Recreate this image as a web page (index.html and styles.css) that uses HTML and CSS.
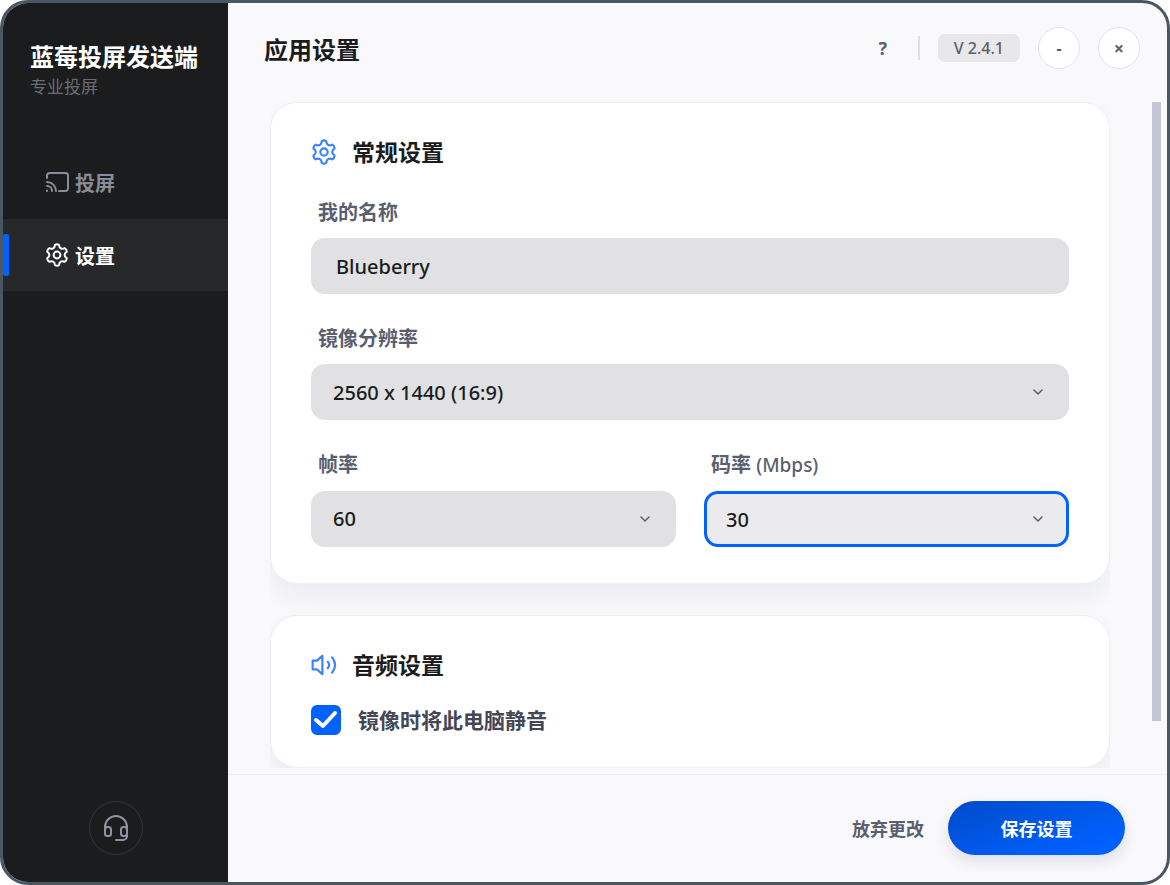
FILE: index.html
```html
<!DOCTYPE html>
<html lang="zh-CN">
<head>
<meta charset="utf-8">
<meta name="viewport" content="width=device-width, initial-scale=1">
<title>应用设置</title>
<link rel="stylesheet" href="styles.css">
</head>
<body>
<svg class="sprite" aria-hidden="true">
  <symbol id="gear" viewBox="0 0 24 24">
    <path d="M9.900 2Q12 .6 14.100 2C14.100 5.200 16.800 6.800 19.600 5.200Q21.900 6.300 21.700 8.800C18.900 10.400 18.900 13.600 21.700 15.200Q21.900 17.700 19.600 18.800C16.800 17.200 14.100 18.800 14.100 22Q12 23.400 9.900 22C9.900 18.800 7.200 17.200 4.400 18.800Q2.100 17.700 2.300 15.200C5.100 13.600 5.100 10.400 2.300 8.800Q2.100 6.300 4.400 5.200C7.200 6.800 9.900 5.200 9.900 2z"/>
    <circle cx="12" cy="12" r="3.400"/>
  </symbol>
</svg>
<div class="window">
  <aside class="sidebar">
    <div class="brand">
      <p class="brand-name">蓝莓投屏发送端</p>
      <p class="brand-note">专业投屏</p>
    </div>
    <nav class="nav">
      <a class="nav-item" href="#cast">
        <svg class="nav-icon" viewBox="0 0 24 24" aria-hidden="true"><path d="M2 8V5.500A2.500 2.500 0 0 1 4.500 3h16A2.500 2.500 0 0 1 23 5.500v13a2.500 2.500 0 0 1-2.500 2.500H14M2 12a9 9 0 0 1 9 9M2 16a5 5 0 0 1 5 5M2 20.500v.5"/></svg>
        <span>投屏</span>
      </a>
      <a class="nav-item nav-item-active" href="#settings" aria-current="page">
        <svg class="nav-icon" viewBox="0 0 24 24" aria-hidden="true"><use href="#gear"/></svg>
        <span>设置</span>
      </a>
    </nav>
    <button class="support" type="button" aria-label="客服">
      <svg class="support-icon" viewBox="0 0 26 26" aria-hidden="true"><path d="M2 18v-6a11 11 0 0 1 22 0v9a4 4 0 0 1-4 4h-7"/><rect x="2" y="12" width="6" height="9" rx="2.500"/><rect x="18" y="12" width="6" height="9" rx="2.500"/></svg>
    </button>
  </aside>

  <main class="main">
    <header class="header">
      <h1 class="title">应用设置</h1>
      <button class="help" type="button" aria-label="帮助">?</button>
      <span class="divider"></span>
      <span class="version">V 2.4.1</span>
      <button class="round" type="button" aria-label="最小化">-</button>
      <button class="round round-close" type="button" aria-label="关闭">×</button>
    </header>

    <form class="form" id="settings-form">
      <div class="cards">
        <section class="card">
          <h2 class="card-title">
            <svg class="card-icon" viewBox="0 0 24 24" aria-hidden="true"><use href="#gear"/></svg>
            常规设置
          </h2>
          <div class="fields">
            <div class="field field-wide">
              <label class="label" for="name">我的名称</label>
              <input class="control control-text" id="name" type="text" value="Blueberry">
            </div>
            <div class="field field-wide">
              <label class="label" for="resolution">镜像分辨率</label>
              <div class="picker">
                <select class="control" id="resolution"><option>2560 x 1440 (16:9)</option></select>
                <svg class="chevron" viewBox="0 0 10 10" aria-hidden="true"><path d="M1 3l4 4 4-4"/></svg>
              </div>
            </div>
            <div class="field">
              <label class="label" for="fps">帧率</label>
              <div class="picker">
                <select class="control" id="fps"><option>60</option></select>
                <svg class="chevron" viewBox="0 0 10 10" aria-hidden="true"><path d="M1 3l4 4 4-4"/></svg>
              </div>
            </div>
            <div class="field">
              <label class="label" for="bitrate">码率 <span class="unit">(Mbps)</span></label>
              <div class="picker">
                <select class="control control-focus" id="bitrate"><option>30</option></select>
                <svg class="chevron" viewBox="0 0 10 10" aria-hidden="true"><path d="M1 3l4 4 4-4"/></svg>
              </div>
            </div>
          </div>
        </section>

        <section class="card">
          <h2 class="card-title card-title-audio">
            <svg class="card-icon" viewBox="0 0 24 24" aria-hidden="true"><path d="M1.500 8h4L10.500 3.500v17l-5-4.500h-4zM15.500 9q2.500 3 0 6M19.500 5q5.500 7 0 14"/></svg>
            音频设置
          </h2>
          <label class="check">
            <input class="check-box" type="checkbox" checked>
            <svg class="check-mark" viewBox="0 0 30 30" aria-hidden="true"><path d="M5 15l7 6L24 8"/></svg>
            <span class="check-text">镜像时将此电脑静音</span>
          </label>
        </section>
      </div>
      <div class="scroll" aria-hidden="true"><div class="thumb"></div></div>
    </form>

    <footer class="footer">
      <button class="discard" type="reset" form="settings-form">放弃更改</button>
      <button class="save" type="submit" form="settings-form">保存设置</button>
    </footer>
  </main>
</div>
</body>
</html>
```
FILE: styles.css
```css
* {
  box-sizing: border-box;
}

body {
  margin: 0;
  background: #fff;
  font-family: "Noto Sans", "Noto Sans CJK SC", sans-serif;
  color: #1a1c1d;
}

h1, h2, p {
  margin: 0;
}

button, input, select {
  font: inherit;
  color: inherit;
}

button {
  padding: 0;
  border: 0;
  background: none;
  cursor: pointer;
}

svg {
  fill: none;
  stroke: currentColor;
  stroke-width: 2;
  stroke-linecap: round;
  stroke-linejoin: round;
}

.sprite {
  position: absolute;
  width: 0;
  height: 0;
}

.window {
  display: grid;
  grid-template-columns: 225px 1fr;
  min-height: 100vh;
  border: 3px solid #4b5665;
  border-radius: 28px;
  background: #f9f9fc;
  overflow: hidden;
}

/* Sidebar */

.sidebar {
  display: flex;
  flex-direction: column;
  padding: 37px 0 27px;
  background: #1a1c1d;
}

.brand {
  padding: 0 27px;
}

.brand-name {
  font-size: 24px;
  line-height: 34px;
  font-weight: 700;
  color: #fff;
}

.brand-note {
  font-size: 17px;
  line-height: 26px;
  color: #6b6d76;
}

.nav {
  display: grid;
  gap: 1px;
  margin-top: 46px;
}

.nav-item {
  position: relative;
  display: flex;
  align-items: center;
  gap: 6px;
  height: 72px;
  padding-left: 42px;
  font-size: 20px;
  font-weight: 700;
  color: #8a8d98;
  text-decoration: none;
}

.nav-item-active {
  background: #262829;
  color: #fff;
}

.nav-item-active::before {
  content: "";
  position: absolute;
  left: 0;
  top: 15px;
  bottom: 15px;
  width: 6px;
  border-radius: 2px;
  background: #0062ff;
}

.nav-icon {
  width: 24px;
  height: 24px;
}

.support {
  display: grid;
  place-items: center;
  width: 54px;
  height: 54px;
  margin: auto auto 0;
  border: 1px solid #333537;
  border-radius: 50%;
  color: #8f92a1;
}

.support-icon {
  width: 26px;
  height: 26px;
}

/* Header */

.main {
  display: flex;
  flex-direction: column;
  min-width: 0;
}

.header {
  display: flex;
  align-items: center;
  gap: 18px;
  height: 90px;
  margin-bottom: 9px;
  padding: 0 27px 0 36px;
  color: #5a5f6e;
}

.title {
  margin-right: auto;
  font-size: 24px;
  font-weight: 700;
  color: #1a1c1d;
}

.help {
  width: 34px;
  font-size: 18px;
  font-weight: 700;
}

.divider {
  width: 2px;
  height: 24px;
  background: #dcdfea;
}

.version {
  padding: 0 16px;
  border-radius: 7px;
  background: #e8e8ea;
  font-size: 16px;
  line-height: 28px;
  font-weight: 500;
}

.round {
  width: 42px;
  height: 42px;
  border: 1px solid #dfe2ee;
  border-radius: 50%;
  background: #fff;
  font-size: 16px;
  font-weight: 700;
}

.round-close {
  font-size: 18px;
}

/* Cards */

.form {
  display: flex;
  flex: 1;
  gap: 42px;
  padding: 0 6px 6px 42px;
}

.cards {
  display: flex;
  flex: 1;
  flex-direction: column;
  gap: 31px;
  min-width: 0;
  overflow: hidden;
}

.card {
  padding: 35px 40px 36px;
  border: 1px solid #eeeff4;
  border-radius: 27px;
  background: #fff;
  box-shadow: 0 12px 24px rgba(25, 30, 45, 0.06);
}

.card + .card {
  padding-bottom: 32px;
}

.card-title {
  display: flex;
  align-items: center;
  gap: 15px;
  margin-bottom: 32px;
  font-size: 23px;
  line-height: 28px;
  font-weight: 700;
}

.card-title-audio {
  margin-bottom: 26px;
}

.card-icon {
  width: 26px;
  height: 26px;
  color: #3b82ff;
}

.fields {
  display: grid;
  grid-template-columns: 1fr 1fr;
  gap: 30px 28px;
}

.field {
  display: grid;
  gap: 11px;
}

.field-wide {
  grid-column: 1 / -1;
}

.label {
  padding-left: 7px;
  font-size: 20px;
  line-height: 29px;
  font-weight: 700;
  color: #5a5f70;
}

.unit {
  font-size: 19px;
  font-weight: 500;
}

.control {
  width: 100%;
  height: 56px;
  padding: 0 22px;
  border: 0;
  border-radius: 14px;
  outline: 0;
  background: #e1e1e3;
  font-size: 20px;
  font-weight: 500;
  color: #1a1c1d;
  appearance: none;
}

.control-text {
  padding: 0 25px;
}

.control-focus {
  padding: 0 19px;
  border: 3px solid #0062ff;
  background: #ebebed;
}

.picker {
  display: grid;
  align-items: center;
}

.picker > * {
  grid-area: 1 / 1;
}

.chevron {
  justify-self: end;
  width: 10px;
  height: 10px;
  margin-right: 26px;
  color: #5a5f70;
  stroke-width: 1.500;
  pointer-events: none;
}

.check {
  display: grid;
  grid-template-columns: 30px 1fr;
  align-items: center;
  column-gap: 17px;
  height: 30px;
}

.check-box {
  grid-area: 1 / 1;
  width: 30px;
  height: 30px;
  margin: 0;
  border-radius: 6px;
  background: #fff;
  border: 2px solid #c3c7d3;
  appearance: none;
}

.check-box:checked {
  border-color: #0062ff;
  background: #0062ff;
}

.check-mark {
  grid-area: 1 / 1;
  z-index: 1;
  width: 30px;
  height: 30px;
  color: #fff;
  stroke-width: 4;
  pointer-events: none;
}

.check-text {
  font-size: 21px;
  line-height: 30px;
  font-weight: 700;
  color: #444756;
}

.scroll {
  width: 9px;
}

.thumb {
  height: 93%;
  background: #c3c7d3;
}

/* Footer */

.footer {
  display: flex;
  align-items: center;
  justify-content: flex-end;
  gap: 24px;
  padding: 26px 42px 27px;
  border-top: 1px solid #eff0f5;
  font-size: 18px;
  font-weight: 700;
}

.discard {
  color: #5a5f6e;
}

.save {
  width: 177px;
  height: 54px;
  border-radius: 27px;
  background: linear-gradient(160deg, #004bca, #0061ff 85%);
  box-shadow: 0 6px 14px rgba(20, 25, 50, 0.12);
  color: #fff;
}
```
